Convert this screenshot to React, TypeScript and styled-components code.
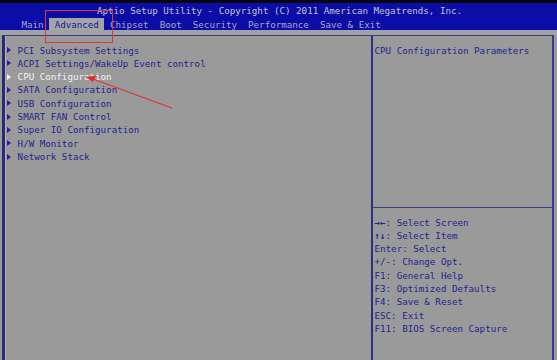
import React from "react";
import styled, { createGlobalStyle } from "styled-components";

const Global = createGlobalStyle`
  html, body { margin: 0; padding: 0; background: #9a9a9a; }
  #root { width: 557px; height: 360px; }
`;

const mono = `"DejaVu Sans Mono", "Liberation Mono", monospace`;

const Screen = styled.div`
  position: relative;
  width: 557px;
  height: 360px;
  overflow: hidden;
  background: #9a9a9a;
  display: flex;
  flex-direction: column;
  font-family: ${mono};
  font-size: 9.2px;
`;

const Header = styled.div`
  background: #0c0ca6;
  border-top: 3px solid #050510;
  padding-top: 1px;
  height: 26px;
  display: flex;
  flex-direction: column;
`;

const Title = styled.div`
  height: 14px;
  line-height: 14px;
  text-align: center;
  color: #c4c4d8;
  white-space: pre;
  padding-left: 2px;
`;

const MenuBar = styled.div`
  display: flex;
  height: 12px;
  padding-left: 16px;
  white-space: pre;
`;

const Tab = styled.div<{ $active?: boolean }>`
  height: 12px;
  line-height: 13px;
  padding: 0 5.5px;
  background: ${(p) => (p.$active ? "#a4a4a4" : "transparent")};
  color: ${(p) => (p.$active ? "#1818a0" : "#a6a6c8")};
`;

const Strip = styled.div`
  height: 5px;
  background: #a2a2a2;
`;

const Frame = styled.div`
  flex: 1;
  display: flex;
  box-sizing: border-box;
  margin-left: 2px;
  width: 552px;
  border-top: 1px solid #3a3a8c;
  border-left: 3px solid #2a2a7a;
  border-right: 2px solid #3a3a8c;
`;

const LeftPanel = styled.div`
  width: 366px;
  flex: none;
  padding: 7.5px 0 0 0.5px;
  box-sizing: border-box;
  border-left: 1px solid #b0b0b8;
  display: flex;
  flex-direction: column;
`;

const Item = styled.div<{ $selected?: boolean }>`
  display: flex;
  align-items: center;
  height: 13.3px;
  line-height: 13.3px;
  white-space: pre;
  color: ${(p) => (p.$selected ? "#f2f2f2" : "#24248e")};
`;

const Arrow = styled.span<{ $selected?: boolean }>`
  width: 11.1px;
  flex: none;
  display: flex;
  align-items: center;
  &::before {
    content: "";
    margin-left: 0.5px;
    border-left: 4px solid ${(p) => (p.$selected ? "#f2f2f2" : "#2020a0")};
    border-top: 3px solid transparent;
    border-bottom: 3px solid transparent;
  }
`;

const RightPanel = styled.div`
  flex: 1;
  display: flex;
  flex-direction: column;
  border-left: 2px solid #2e2e86;
`;

const HelpTop = styled.div`
  height: 172px;
  padding: 7.5px 0 0 1.5px;
  box-sizing: border-box;
  color: #24248e;
  white-space: pre;
  line-height: 13.3px;
  border-bottom: 1px solid #3a3a8c;
`;

const Keys = styled.div`
  padding: 7.5px 0 0 1.5px;
  display: flex;
  flex-direction: column;
`;

const Key = styled.div`
  height: 13.3px;
  line-height: 13.3px;
  white-space: pre;
  color: #24248e;
`;

const KeyGlyph = styled.span`
  font-weight: bold;
`;

const Callout = styled.div`
  position: absolute;
  left: 45px;
  top: 10px;
  width: 66px;
  height: 31px;
  border: 1px solid #d83a3a;
  pointer-events: none;
`;

const Overlay = styled.svg`
  position: absolute;
  left: 0;
  top: 0;
  pointer-events: none;
`;

const tabs = ["Main", "Advanced", "Chipset", "Boot", "Security", "Performance", "Save & Exit"];

const items = [
  "PCI Subsystem Settings",
  "ACPI Settings/WakeUp Event control",
  "CPU Configuration",
  "SATA Configuration",
  "USB Configuration",
  "SMART FAN Control",
  "Super IO Configuration",
  "H/W Monitor",
  "Network Stack",
];

const keys: [string, string][] = [
  ["→←", ": Select Screen"],
  ["↑↓", ": Select Item"],
  ["", "Enter: Select"],
  ["", "+/-: Change Opt."],
  ["", "F1: General Help"],
  ["", "F3: Optimized Defaults"],
  ["", "F4: Save & Reset"],
  ["", "ESC: Exit"],
  ["", "F11: BIOS Screen Capture"],
];

export default function App() {
  return (
    <>
      <Global />
      <Screen>
        <Header>
          <Title>Aptio Setup Utility - Copyright (C) 2011 American Megatrends, Inc.</Title>
          <MenuBar>
            {tabs.map((t) => (
              <Tab key={t} $active={t === "Advanced"}>
                {t}
              </Tab>
            ))}
          </MenuBar>
        </Header>
        <Strip />
        <Frame>
          <LeftPanel>
            {items.map((it) => (
              <Item key={it} $selected={it === "CPU Configuration"}>
                <Arrow $selected={it === "CPU Configuration"} />
                {it}
              </Item>
            ))}
          </LeftPanel>
          <RightPanel>
            <HelpTop>CPU Configuration Parameters</HelpTop>
            <Keys>
              {keys.map(([g, t]) => (
                <Key key={t}>
                  {g && <KeyGlyph>{g}</KeyGlyph>}
                  {t}
                </Key>
              ))}
            </Keys>
          </RightPanel>
        </Frame>
        <Callout />
        <Overlay width="557" height="360" viewBox="0 0 557 360">
          <line x1="172" y1="108" x2="93" y2="79" stroke="#e03434" strokeWidth="1.2" />
          <polygon points="86,77 96,75.5 93,82" fill="#e82828" />
        </Overlay>
      </Screen>
    </>
  );
}
